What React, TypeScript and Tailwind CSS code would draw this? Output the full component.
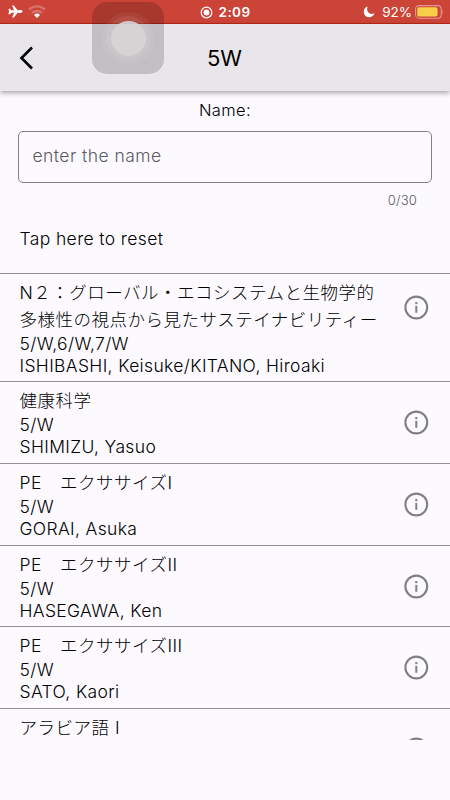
import { IoAirplane, IoMoon } from "react-icons/io5";

type CourseType = {
  title: string[];
  period?: string;
  teacher?: string;
};

const courses: CourseType[] = [
  {
    title: ["N２：グローバル・エコシステムと生物学的", "多様性の視点から見たサステイナビリティー"],
    period: "5/W,6/W,7/W",
    teacher: "ISHIBASHI, Keisuke/KITANO, Hiroaki",
  },
  { title: ["健康科学"], period: "5/W", teacher: "SHIMIZU, Yasuo" },
  { title: ["PE　エクササイズI"], period: "5/W", teacher: "GORAI, Asuka" },
  { title: ["PE　エクササイズII"], period: "5/W", teacher: "HASEGAWA, Ken" },
  { title: ["PE　エクササイズIII"], period: "5/W", teacher: "SATO, Kaori" },
  { title: ["アラビア語 I"] },
];

const StatusBar = () => {
  return (
    <div className="flex h-6 items-center border-b border-[#b92a17] bg-[#cb4437] text-white">
      <div className="flex flex-1 items-center gap-[5px] pl-2">
        <IoAirplane className="h-[15px] w-[15px]" />
        <svg width="18" height="13" viewBox="0 0 18 13" fill="none">
          <path d="M1 4.6a11.5 11.5 0 0 1 16 0" stroke="white" strokeOpacity=".25" strokeWidth="2.4" />
          <path d="M4 8a7.2 7.2 0 0 1 10 0" stroke="white" strokeOpacity=".25" strokeWidth="2.3" />
          <path d="M6 10a4.4 4.4 0 0 1 6 0l-3 3z" fill="white" />
        </svg>
      </div>
      <div className="flex items-center gap-[6px] pr-[3px] pt-px">
        <svg width="13" height="13" viewBox="0 0 13 13">
          <circle cx="6.5" cy="6.5" r="5.3" fill="none" stroke="white" strokeWidth="1.2" />
          <circle cx="6.5" cy="6.5" r="2.9" fill="white" />
        </svg>
        <span className="-mr-px text-[13.5px] font-semibold tracking-[0.4px]">2:09</span>
      </div>
      <div className="flex flex-1 items-center justify-end pr-[6px] pt-px">
        <IoMoon className="mr-[7px] h-3 w-3" />
        <span className="mr-[3px] text-[13.5px]">92%</span>
        <svg width="29" height="14" viewBox="0 0 29 14">
          <rect x=".6" y=".6" width="25.6" height="12.6" rx="3.4" fill="none" stroke="white" strokeOpacity=".45" strokeWidth="1.1" />
          <rect x="2.2" y="2.2" width="20.4" height="9.4" rx="1.8" fill="#f8ce46" />
          <path d="M27.4 4.8q1.6 2.2 0 4.4z" fill="white" fillOpacity=".45" />
        </svg>
      </div>
    </div>
  );
};

// iOS floating shortcut button, drawn over the header
const AssistiveTouch = () => {
  return (
    <div className="absolute left-[92px] top-[2px] flex h-[72px] w-[72px] items-center justify-center rounded-[15px] bg-black/17">
      <div className="flex h-[53px] w-[53px] items-center justify-center rounded-full bg-white/5">
        <div className="flex h-[44px] w-[44px] items-center justify-center rounded-full bg-white/8">
          <div className="h-[35px] w-[35px] rounded-full bg-[#d6d4d5]/90" />
        </div>
      </div>
    </div>
  );
};

const InfoIcon = ({ className }: { className: string }) => {
  return (
    <svg className={className} width="29" height="29" viewBox="0 0 29 29" fill="none">
      <circle cx="14.3" cy="14.5" r="10.9" stroke="#808084" strokeWidth="2.1" />
      <rect x="13.2" y="9" width="2.2" height="2.2" rx=".6" fill="#808084" />
      <rect x="13.3" y="12.9" width="2" height="6.9" fill="#808084" />
    </svg>
  );
};

const CourseRow = ({ course }: { course: CourseType }) => {
  return (
    <div className="flex items-start justify-between border-t border-[#919095] pb-[5px] pl-[19.5px] pr-[19px] pt-[5px]">
      <div className="whitespace-pre">
        {course.title.map((line, index) => (
          <p key={index} className="h-[27px] leading-[27px] tracking-[0.5px]">
            {line}
          </p>
        ))}
        {course.period && <p className="h-[22px] leading-[22px]">{course.period}</p>}
        {course.teacher && <p className="h-[21.7px] leading-[22px]">{course.teacher}</p>}
      </div>
      <InfoIcon className={course.title.length > 1 ? "mt-[14px] shrink-0" : "mt-[21px] shrink-0"} />
    </div>
  );
};

const App = () => {
  return (
    <div className="relative h-[800px] w-[450px] overflow-hidden bg-[#fcfaff] font-['Inter','Noto_Sans_CJK_JP',sans-serif] text-black">
      <StatusBar />
      <header className="grid h-[67px] grid-cols-3 items-center bg-[#e8e6ea] shadow-[0_2px_5px_rgba(0,0,0,0.35)]">
        <svg className="ml-[18px]" width="18" height="26" viewBox="0 0 18 26" fill="none">
          <path d="M14 2.5L3.5 13L14 23.5" stroke="black" strokeWidth="2.6" />
        </svg>
        <h1 className="pr-px pt-px text-center text-[22px]">5W</h1>
      </header>

      <div className="flex flex-col px-[18px] text-[17.5px] font-light tracking-[0.38px]">
        <p className="mt-[7px] h-6 text-center text-[16.5px] leading-6">Name:</p>
        <input
          className="mt-[9px] h-[52px] rounded-[5px] border border-[#828185] px-[13.5px] pb-[3px] tracking-[0.45px] placeholder:text-[#5c5b5f]"
          placeholder="enter the name"
        />
        <p className="mr-[15px] mt-[7px] h-5 text-right text-[13px] leading-5 tracking-[0.2px] text-[#5c5b5f]">0/30</p>
        <p className="ml-[1.5px] mt-[15px] h-7 leading-7">Tap here to reset</p>
      </div>

      <div className="mt-[19.6px] h-[467.4px] overflow-hidden text-[17.5px] font-light tracking-[0.35px]">
        {courses.map((course, index) => (
          <CourseRow key={index} course={course} />
        ))}
      </div>
      <AssistiveTouch />
    </div>
  );
};

export default App;
